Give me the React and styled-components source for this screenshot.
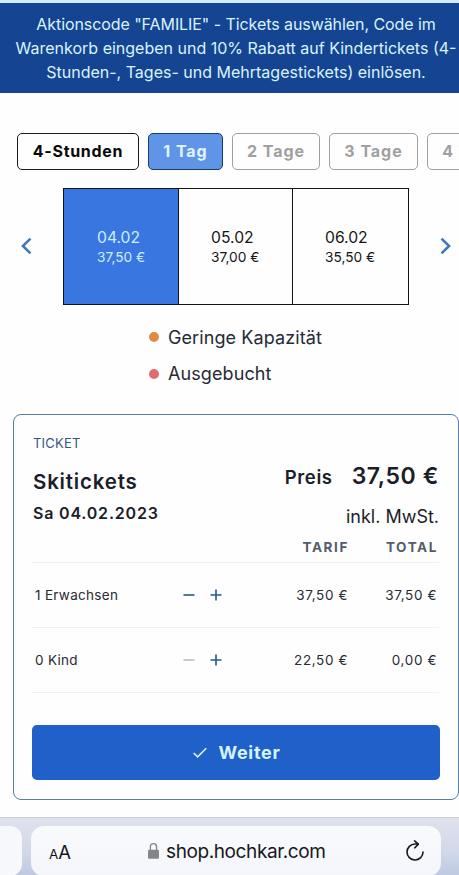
import React, { useState } from 'react';
import styled, { createGlobalStyle } from 'styled-components';

const GlobalStyle = createGlobalStyle`
  * {
    box-sizing: border-box;
  }

  body {
    margin: 0;
    background: #fefefe;
    font-family: Inter, 'Liberation Sans', sans-serif;
    color: #1b1d29;
    overflow: hidden;
  }

  button {
    font-family: inherit;
    padding: 0;
    margin: 0;
    background: none;
    border: 0;
    white-space: nowrap;
  }
`;

const Page = styled.div`
  width: 459px;
  height: 875px;
  display: flex;
  flex-direction: column;
  overflow: hidden;
`;

const Banner = styled.div`
  height: 93px;
  flex: none;
  padding: 9px 0 0 13px;
  border-top: 3px solid #d5ebfc;
  background: #154592;
  color: #d9f3ff;
  text-align: center;
  font-size: 16px;
  line-height: 24px;
  white-space: nowrap;
`;

const BannerLine = styled.div`
  letter-spacing: ${({ $spacing }) => $spacing || 0}px;
`;

const Durations = styled.div`
  display: flex;
  flex: none;
  gap: 9px;
  margin: 40px 0 0 17px;
`;

const Duration = styled.button`
  flex: none;
  width: ${({ $width }) => $width}px;
  height: 37px;
  padding-bottom: 1px;
  border: 1px solid ${({ $state }) => ($state === 'disabled' ? '#a0a0a0' : $state === 'active' ? '#173a70' : '#1c1c1c')};
  border-radius: 5px;
  background: ${({ $state }) => ($state === 'active' ? '#6094e6' : '#fefefe')};
  color: ${({ $state }) => ($state === 'disabled' ? '#a0a0a0' : $state === 'active' ? '#e0f6ff' : '#080808')};
  font-size: 16px;
  font-weight: 700;
  letter-spacing: ${({ $state }) => ($state === 'default' ? 0.7 : 0.95)}px;
`;

const Calendar = styled.div`
  display: flex;
  flex: none;
  align-items: center;
  justify-content: space-between;
  height: 117px;
  margin: 18px 7px 0 19px;
`;

const Arrow = styled.button`
  display: flex;
  padding-bottom: 1px;
  color: #4279b8;
`;

const Days = styled.div`
  display: grid;
  grid-template-columns: 114px 114px 116px;
  height: 117px;
  margin-left: 1px;
  border: 1px solid #101318;
`;

const Day = styled.div`
  padding: 38px 0 0 33px;
  background: ${({ $active }) => ($active ? '#3976e0' : '#fefefe')};
  color: ${({ $active }) => ($active ? '#cbeeff' : '#161616')};

  & + & {
    border-left: 1px solid #101318;
    padding-left: 32px;
  }
`;

const DayDate = styled.div`
  font-size: 15.7px;
  line-height: 22px;
`;

const DayPrice = styled.div`
  margin-top: -1px;
  font-size: 13.7px;
  line-height: 18px;
`;

const Legend = styled.div`
  flex: none;
  margin: 14px 0 0 149px;
`;

const LegendItem = styled.div`
  display: flex;
  align-items: center;
  gap: 9px;
  height: 36.5px;
  font-size: 18px;
  letter-spacing: 0.1px;
  color: #272936;
`;

const Dot = styled.span`
  width: 10px;
  height: 10px;
  border-radius: 50%;
  background: ${({ $color }) => $color};
`;

const Card = styled.section`
  flex: none;
  width: 446px;
  height: 386px;
  margin: 22px 0 0 13px;
  padding: 18px 19px 0 18px;
  border: 1px solid #557fa9;
  border-radius: 8px;
`;

const Label = styled.div`
  padding-left: 1px;
  font-size: 13px;
  line-height: 20px;
  letter-spacing: 0.2px;
  color: #355785;
`;

const Summary = styled.div`
  display: flex;
  justify-content: space-between;
  height: 80px;
  padding-left: 1px;
  white-space: nowrap;
`;

const Title = styled.h2`
  margin: 14px 0 0;
  font-size: 20.5px;
  line-height: 30px;
  font-weight: 600;
  letter-spacing: 0.8px;
`;

const DateText = styled.div`
  margin-top: 4px;
  font-size: 16px;
  line-height: 24px;
  font-weight: 600;
  letter-spacing: 0.8px;
`;

const PriceBlock = styled.div`
  padding-top: 6px;
  text-align: right;
`;

const PriceLine = styled.div`
  display: flex;
  align-items: baseline;
  justify-content: flex-end;
  gap: 19px;
  line-height: 34px;
`;

const PriceLabel = styled.span`
  font-size: 18.5px;
  font-weight: 600;
  letter-spacing: 0.6px;
`;

const Price = styled.span`
  font-size: 23px;
  font-weight: 600;
  letter-spacing: 0.6px;
`;

const Vat = styled.div`
  margin-top: 10px;
  font-size: 18px;
  line-height: 26px;
`;

const TableRow = styled.div`
  display: grid;
  grid-template-columns: 148px 1fr 89px;
  align-items: center;
  height: ${({ $head }) => ($head ? 30 : 65)}px;
  padding: 0 2px ${({ $head }) => ($head ? 1 : 0)}px 3px;
  border-bottom: 1px solid #eef0f2;
  font-size: 13.5px;
  letter-spacing: 0.3px;
  color: #2a2a32;
`;

const HeadCell = styled.span`
  margin-right: -1px;
  text-align: right;
  font-size: 13.5px;
  font-weight: 700;
  letter-spacing: 1.6px;
  color: #555d69;
`;

const Cell = styled.span`
  text-align: right;
  letter-spacing: 0.6px;
`;

const TariffCells = styled.div`
  display: flex;
  align-items: center;
  gap: 15px;

  ${Cell} {
    margin-left: auto;
  }
`;

const Step = styled.button`
  display: flex;
  color: ${({ disabled }) => (disabled ? '#b9bec1' : '#24578f')};
`;

const NextButton = styled.button`
  display: flex;
  align-items: center;
  justify-content: center;
  gap: 11px;
  width: 408px;
  height: 55px;
  margin-top: 32px;
  padding-left: 2px;
  border-radius: 5px;
  background: #2060c9;
  color: #d5f4ff;
  font-size: 18px;
  font-weight: 700;
  letter-spacing: 0.7px;
`;

const BrowserBar = styled.div`
  flex: none;
  display: flex;
  gap: 9px;
  height: 59px;
  margin-top: 17px;
  padding-top: 8px;
  border-top: 1px solid #cbced9;
  background: linear-gradient(#dfe2ee 0%, #d3d9ea 55%, #bdc9e1 100%);
`;

const PreviousTab = styled.div`
  width: 22px;
  height: 50px;
  border-radius: 0 12px 12px 0;
  background: #f7f8fb;
`;

const AddressBar = styled.div`
  display: flex;
  align-items: center;
  width: 410px;
  height: 50px;
  padding: 0 16px 0 18px;
  border-radius: 13px;
  background: linear-gradient(#f9fafc, #f4f6fc);
  color: #16171a;
`;

const TextSize = styled.span`
  width: 99px;
  padding-top: 2px;
  font-size: 18.5px;

  small {
    font-size: 13.5px;
  }
`;

const Url = styled.span`
  flex: 1;
  margin-left: 7px;
  padding-top: 1px;
  font-size: 19px;
  letter-spacing: -0.4px;
  white-space: nowrap;
`;

const Chevron = ({ flip }) => (
  <svg width="13" height="18" viewBox="0 0 13 18" fill="none" stroke="currentColor" strokeWidth="2.6">
    <path d={flip ? 'M2.5 1.6l7.6 7.4-7.6 7.4' : 'M11.5 1.6L3.9 9l7.6 7.4'} />
  </svg>
);

const Minus = () => (
  <svg width="12" height="12" viewBox="0 0 12 12" stroke="currentColor" strokeWidth="1.6">
    <path d="M.5 6h11" />
  </svg>
);

const Plus = () => (
  <svg width="12" height="12" viewBox="0 0 12 12" stroke="currentColor" strokeWidth="1.6">
    <path d="M.5 6h11M6 .5v11" />
  </svg>
);

const Check = () => (
  <svg width="14" height="12" viewBox="0 0 14 12" fill="none" stroke="currentColor" strokeWidth="1.6">
    <path d="M.7 6l3.9 3.9L13.3 1.3" />
  </svg>
);

const Lock = () => (
  <svg width="11" height="16" viewBox="0 0 11 16" fill="none">
    <path d="M2.4 8V4.1a3.1 3.4 0 0 1 6.2 0V8" stroke="#858589" strokeWidth="1.3" />
    <rect y="6.8" width="11" height="9" rx="1.4" fill="#858589" />
  </svg>
);

const Reload = () => (
  <svg width="20" height="22" viewBox="0 0 20 22" fill="none" stroke="currentColor" strokeWidth="1.6" strokeLinecap="round" strokeLinejoin="round">
    <path d="M18 12a8 8 0 1 1-8-8h3.2" />
    <path d="M9.6 .9l3.7 3.2-3.4 3.7" />
  </svg>
);

const durations = [
  { label: '4-Stunden', width: 122, state: 'default' },
  { label: '1 Tag', width: 75, state: 'active' },
  { label: '2 Tage', width: 88, state: 'disabled' },
  { label: '3 Tage', width: 89, state: 'disabled' },
  { label: '4 Tage', width: 89, state: 'disabled' },
];

const days = [
  { date: '04.02', price: '37,50 €' },
  { date: '05.02', price: '37,00 €' },
  { date: '06.02', price: '35,50 €' },
];

const tariffs = [
  { name: 'Erwachsen', price: 37.5 },
  { name: 'Kind', price: 22.5 },
];

const formatPrice = (value) => `${value.toFixed(2).replace('.', ',')} €`;

const App = () => {
  const [counts, setCounts] = useState([1, 0]);

  const changeCount = (index, step) => {
    setCounts(counts.map((count, i) => (i === index ? Math.max(0, count + step) : count)));
  };

  const total = tariffs.reduce((sum, tariff, i) => sum + tariff.price * counts[i], 0);

  return (
    <>
      <GlobalStyle />
      <Page>
        <Banner>
          <BannerLine $spacing={-0.07}>Aktionscode "FAMILIE" - Tickets auswählen, Code im</BannerLine>
          <BannerLine>Warenkorb eingeben und 10% Rabatt auf Kindertickets (4-</BannerLine>
          <BannerLine>Stunden-, Tages- und Mehrtagestickets) einlösen.</BannerLine>
        </Banner>
        <Durations>
          {durations.map((item) => (
            <Duration key={item.label} $width={item.width} $state={item.state}>{item.label}</Duration>
          ))}
        </Durations>
        <Calendar>
          <Arrow><Chevron /></Arrow>
          <Days>
            {days.map((day, index) => (
              <Day key={day.date} $active={index === 0}>
                <DayDate>{day.date}</DayDate>
                <DayPrice>{day.price}</DayPrice>
              </Day>
            ))}
          </Days>
          <Arrow><Chevron flip /></Arrow>
        </Calendar>
        <Legend>
          <LegendItem><Dot $color="#df8c42" />Geringe Kapazität</LegendItem>
          <LegendItem><Dot $color="#df6c70" />Ausgebucht</LegendItem>
        </Legend>
        <Card>
          <Label>TICKET</Label>
          <Summary>
            <div>
              <Title>Skitickets</Title>
              <DateText>Sa 04.02.2023</DateText>
            </div>
            <PriceBlock>
              <PriceLine>
                <PriceLabel>Preis</PriceLabel>
                <Price>{formatPrice(total)}</Price>
              </PriceLine>
              <Vat>inkl. MwSt.</Vat>
            </PriceBlock>
          </Summary>
          <TableRow $head>
            <span />
            <HeadCell>TARIF</HeadCell>
            <HeadCell>TOTAL</HeadCell>
          </TableRow>
          {tariffs.map((tariff, index) => (
            <TableRow key={tariff.name}>
              <span>{counts[index]} {tariff.name}</span>
              <TariffCells>
                <Step disabled={counts[index] === 0} onClick={() => changeCount(index, -1)}><Minus /></Step>
                <Step onClick={() => changeCount(index, 1)}><Plus /></Step>
                <Cell>{formatPrice(tariff.price)}</Cell>
              </TariffCells>
              <Cell>{formatPrice(tariff.price * counts[index])}</Cell>
            </TableRow>
          ))}
          <NextButton><Check />Weiter</NextButton>
        </Card>
        <BrowserBar>
          <PreviousTab />
          <AddressBar>
            <TextSize><small>A</small>A</TextSize>
            <Lock />
            <Url>shop.hochkar.com</Url>
            <Reload />
          </AddressBar>
        </BrowserBar>
      </Page>
    </>
  );
};

export default App;
